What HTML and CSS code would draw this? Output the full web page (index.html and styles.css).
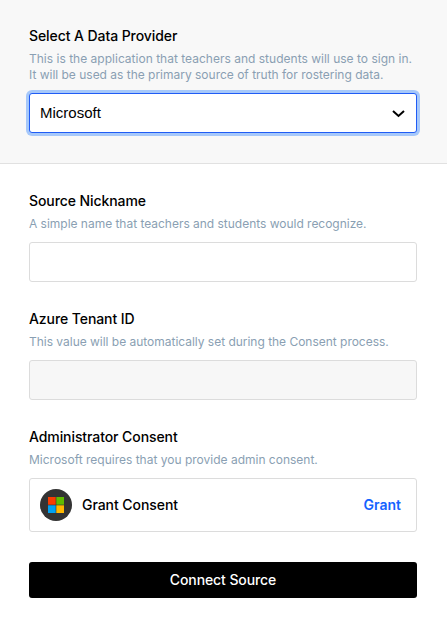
FILE: index.html
```html
<!DOCTYPE html>
<html lang="en">
<head>
<meta charset="utf-8">
<title>Connect Source</title>
<link rel="stylesheet" href="styles.css">
</head>
<body>
<form class="form">
  <section class="provider">
    <h2 class="label">Select A Data Provider</h2>
    <p class="hint intro">This is the application that teachers and students will use to sign in.<br><span class="snug">It will be used as the primary source of truth for rostering data.</span></p>
    <div class="select"><span class="value">Microsoft</span>
      <svg class="chevron" viewBox="0 0 14 10"><path d="M2 1.9 7.5 7 13 1.9"/></svg>
    </div>
  </section>
  <section class="details">
    <div class="field">
      <h2 class="label">Source Nickname</h2>
      <p class="hint">A simple name that teachers and students would recognize.</p>
      <div class="input"></div>
    </div>
    <div class="field">
      <h2 class="label">Azure Tenant ID</h2>
      <p class="hint">This value will be automatically set during the Consent process.</p>
      <div class="input disabled"></div>
    </div>
    <div class="field">
      <h2 class="label">Administrator Consent</h2>
      <p class="hint last">Microsoft requires that you provide admin consent.</p>
      <div class="consent">
        <svg class="logo" viewBox="0 0 32 32"><circle cx="16" cy="16" r="16" fill="#333"/><path fill="#f93c00" d="M8 8h7.7v7.7H8z"/><path fill="#60bc00" d="M16.3 8H24v7.7h-7.7z"/><path fill="#00a2f2" d="M8 16.3h7.7V24H8z"/><path fill="#ffb900" d="M16.3 16.3H24V24h-7.7z"/></svg>
        <span class="name">Grant Consent</span>
        <span class="grant">Grant</span>
      </div>
    </div>
    <div class="submit"><span>Connect Source</span></div>
  </section>
</form>
</body>
</html>
```
FILE: styles.css
```css
* { box-sizing: border-box; }
body { margin: 0; background: #fff; color: #000; font-family: Inter, sans-serif; }
.form { width: 447px; }
.provider { height: 164px; padding: 26px 30px 0 29px; background: #f8f8f8; border-bottom: 1px solid #e1e1e1; }
.details { padding: 27px 30px 0 29px; }
.label { margin: 0; font-size: 14px; line-height: 20px; font-weight: 500; letter-spacing: -0.08px; white-space: nowrap; }
.hint { margin: 5px 0 0; font-size: 12px; line-height: 16px; letter-spacing: -0.02px; color: #8a9fb3; white-space: nowrap; }
.intro { letter-spacing: 0.01px; }
.snug { letter-spacing: -0.01px; }
.last { letter-spacing: 0; }
.select { display: flex; align-items: center; justify-content: space-between; height: 40px; margin-top: 10px; padding: 0 11px 0 10px; background: #fff; border: 1px solid #205cf5; border-radius: 3px; box-shadow: 0 0 0 3px #a6c8fa; }
.value { font-family: "Liberation Sans", Arial, sans-serif; font-size: 15px; line-height: 18px; }
.chevron { width: 14px; height: 10px; margin-top: 2px; fill: none; stroke: #000; stroke-width: 2; }
.field { height: 118px; }
.input { height: 40px; margin-top: 10px; border: 1px solid #dcdcdc; border-radius: 3px; background: #fff; }
.disabled { background: #f7f7f7; }
.consent { display: flex; align-items: center; height: 54px; margin-top: 10px; padding: 0 15px 0 10px; border: 1px solid #dcdcdc; border-radius: 3px; font-size: 14px; line-height: 20px; letter-spacing: -0.06px; }
.logo { width: 32px; height: 32px; margin-right: 10px; }
.name { font-weight: 500; }
.grant { margin-left: auto; font-weight: 600; letter-spacing: 0; color: #1463ff; }
.submit { display: flex; align-items: center; justify-content: center; height: 36px; margin-top: 17px; border-radius: 3px; background: #000; color: #fff; font-size: 14px; line-height: 20px; font-weight: 500; letter-spacing: -0.1px; }
```
